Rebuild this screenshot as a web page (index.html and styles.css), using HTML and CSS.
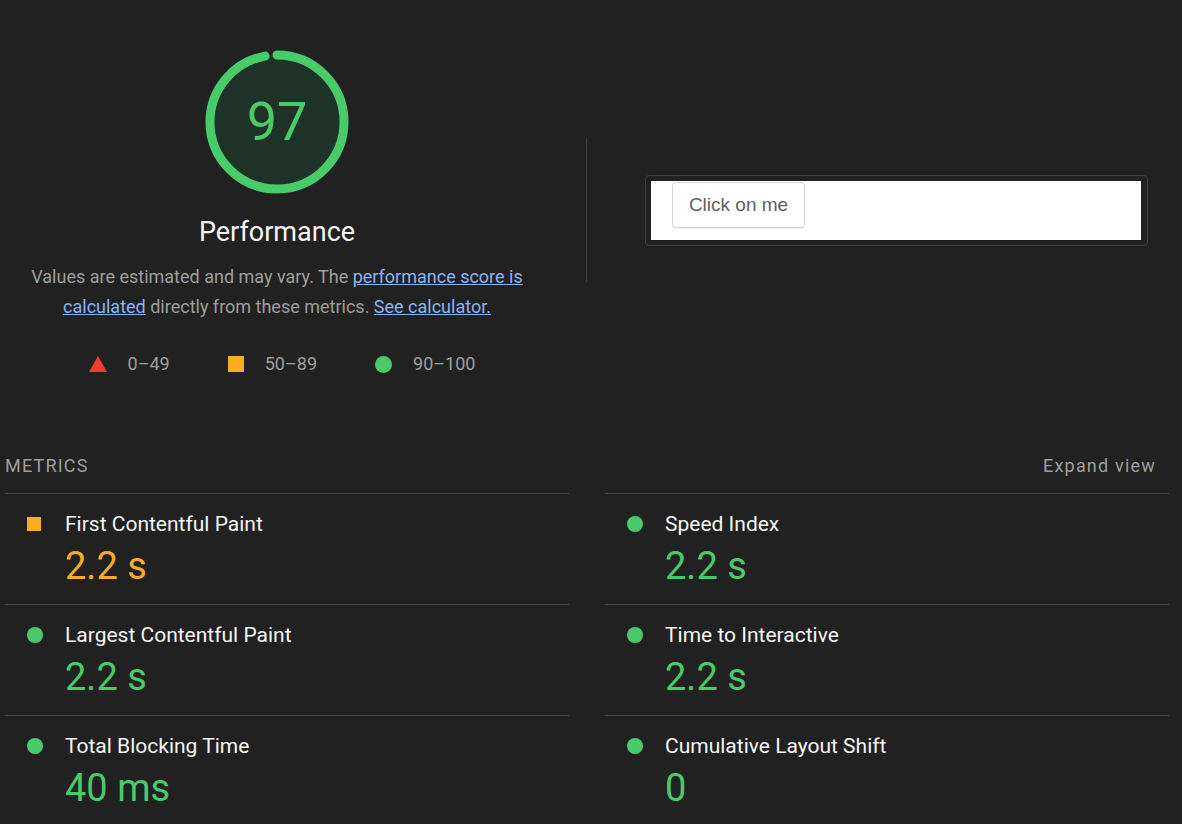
FILE: index.html
```html
<!DOCTYPE html>
<html>
<head>
<meta charset="utf-8">
<link rel="stylesheet" href="styles.css">
</head>
<body>
<div class="report">
  <div class="header">
    <div class="score-col">
      <svg class="gauge" viewBox="0 0 144 144" width="144" height="144">
        <circle class="gauge-base" cx="72" cy="72" r="67"></circle>
        <circle class="gauge-arc" cx="72" cy="72" r="67" stroke-dasharray="408.3 420.97" transform="rotate(-90 72 72)"></circle>
      </svg>
      <div class="gauge-score">97</div>
      <div class="gauge-label">Performance</div>
      <p class="desc">Values are estimated and may vary. The <a href="#">performance score is calculated</a> directly from these metrics. <a href="#">See calculator.</a></p>
      <div class="legend">
        <div class="legend-item"><span class="ico tri"></span><span>0–49</span></div>
        <div class="legend-item"><span class="ico sq"></span><span>50–89</span></div>
        <div class="legend-item"><span class="ico dot"></span><span>90–100</span></div>
      </div>
    </div>
    <div class="divider"></div>
    <div class="shot">
      <div class="shot-img">
        <div class="fake-btn">Click on me</div>
      </div>
    </div>
  </div>

  <div class="metrics-head">
    <span class="metrics-title">METRICS</span>
    <span class="expand">Expand view</span>
  </div>
  <div class="metrics">
    <div class="metric">
      <span class="micon sq"></span>
      <div class="mtext"><div class="mname">First Contentful Paint</div><div class="mval avg">2.2 s</div></div>
    </div>
    <div class="metric">
      <span class="micon dot"></span>
      <div class="mtext"><div class="mname">Speed Index</div><div class="mval pass">2.2 s</div></div>
    </div>
    <div class="metric">
      <span class="micon dot"></span>
      <div class="mtext"><div class="mname">Largest Contentful Paint</div><div class="mval pass">2.2 s</div></div>
    </div>
    <div class="metric">
      <span class="micon dot"></span>
      <div class="mtext"><div class="mname">Time to Interactive</div><div class="mval pass">2.2 s</div></div>
    </div>
    <div class="metric">
      <span class="micon dot"></span>
      <div class="mtext"><div class="mname">Total Blocking Time</div><div class="mval pass">40 ms</div></div>
    </div>
    <div class="metric">
      <span class="micon dot"></span>
      <div class="mtext"><div class="mname">Cumulative Layout Shift</div><div class="mval pass">0</div></div>
    </div>
  </div>
</div>
</body>
</html>
```

FILE: styles.css
```css
html, body {
  margin: 0;
  padding: 0;
  background: #212121;
  height: 100%;
  overflow: hidden;
}
body {
  font-family: Roboto, "Liberation Sans", sans-serif;
  color: #f5f5f5;
}
.report {
  width: 1164px;
  padding-left: 5px;
}
.header {
  display: flex;
  align-items: flex-start;
}
.score-col {
  width: 544px;
  display: flex;
  flex-direction: column;
  align-items: center;
  padding-top: 50px;
  position: relative;
}
.gauge {
  display: block;
}
.gauge-base {
  fill: rgba(12, 204, 102, 0.1);
  stroke: none;
}
.gauge-arc {
  fill: none;
  stroke: #48cb69;
  stroke-width: 9;
  stroke-linecap: round;
}
.gauge-score {
  position: absolute;
  top: 50px;
  left: 0;
  right: 0;
  height: 144px;
  line-height: 144px;
  text-align: center;
  font-size: 54px;
  color: #48cb69;
}
.gauge-label {
  margin-top: 22px;
  font-size: 27px;
  line-height: 32px;
  color: #f5f5f5;
}
.desc {
  margin: 14px 0 0;
  width: 510px;
  text-align: center;
  font-size: 18px;
  line-height: 30px;
  color: #9e9e9e;
}
.desc a {
  color: #8ab4f8;
  text-decoration: underline;
}
.legend {
  margin-top: 30px;
  display: flex;
  gap: 58px;
  font-size: 18px;
  line-height: 24px;
  color: #9e9e9e;
  padding-left: 10px;
}
.legend-item {
  display: flex;
  align-items: center;
  gap: 21px;
}
.ico {
  display: inline-block;
  width: 18px;
  height: 18px;
}
.ico.tri {
  width: 0;
  height: 0;
  border-left: 9px solid transparent;
  border-right: 9px solid transparent;
  border-bottom: 16px solid #f03e2c;
}
.ico.sq {
  width: 16px;
  height: 16px;
  background: #fbac24;
}
.ico.dot {
  width: 17px;
  height: 17px;
  border-radius: 50%;
  background: #48cb69;
}
.divider {
  width: 1px;
  height: 144px;
  background: #424242;
  margin-left: 37px;
  margin-top: 138px;
}
.shot {
  margin-left: 58px;
  margin-top: 175px;
  border: 1px solid #3f3f3f;
  border-radius: 4px;
  padding: 5px 6px 5px 5px;
  width: 490px;
}
.shot-img {
  background: #fff;
  height: 59px;
  position: relative;
}
.fake-btn {
  position: absolute;
  left: 21px;
  top: 1px;
  width: 131px;
  height: 44px;
  border: 1px solid #d4d4d4;
  border-radius: 4px;
  box-shadow: 0 1px 1px rgba(0,0,0,0.08);
  font-family: "Liberation Sans", Arial, sans-serif;
  font-size: 19px;
  line-height: 44px;
  text-align: center;
  color: #5f5f5f;
}
.metrics-head {
  margin-top: 78px;
  display: flex;
  justify-content: space-between;
  font-size: 18px;
  line-height: 24px;
  letter-spacing: 1.2px;
  color: #9e9e9e;
  padding: 0 13px 15px 0;
}
.metrics {
  display: grid;
  grid-template-columns: 564px 564px;
  column-gap: 36px;
}
.metric {
  border-top: 1px solid #444;
  display: flex;
  align-items: flex-start;
  padding: 18px 0 17px 0;
}
.micon {
  flex: none;
  margin-left: 22px;
  margin-top: 5px;
  width: 14px;
  height: 14px;
}
.micon.sq {
  background: #fbac24;
}
.micon.dot {
  width: 16px;
  height: 16px;
  margin-top: 4px;
  border-radius: 50%;
  background: #48cb69;
  margin-left: 22px;
}
.mtext {
  margin-left: 24px;
}
.micon.dot + .mtext {
  margin-left: 22px;
}
.mname {
  font-size: 21px;
  line-height: 24px;
  color: #f5f5f5;
}
.mval {
  margin-top: 9px;
  font-size: 38px;
  line-height: 42px;
}
.mval.avg { color: #fbac24; }
.mval.pass { color: #48cb69; }
```
